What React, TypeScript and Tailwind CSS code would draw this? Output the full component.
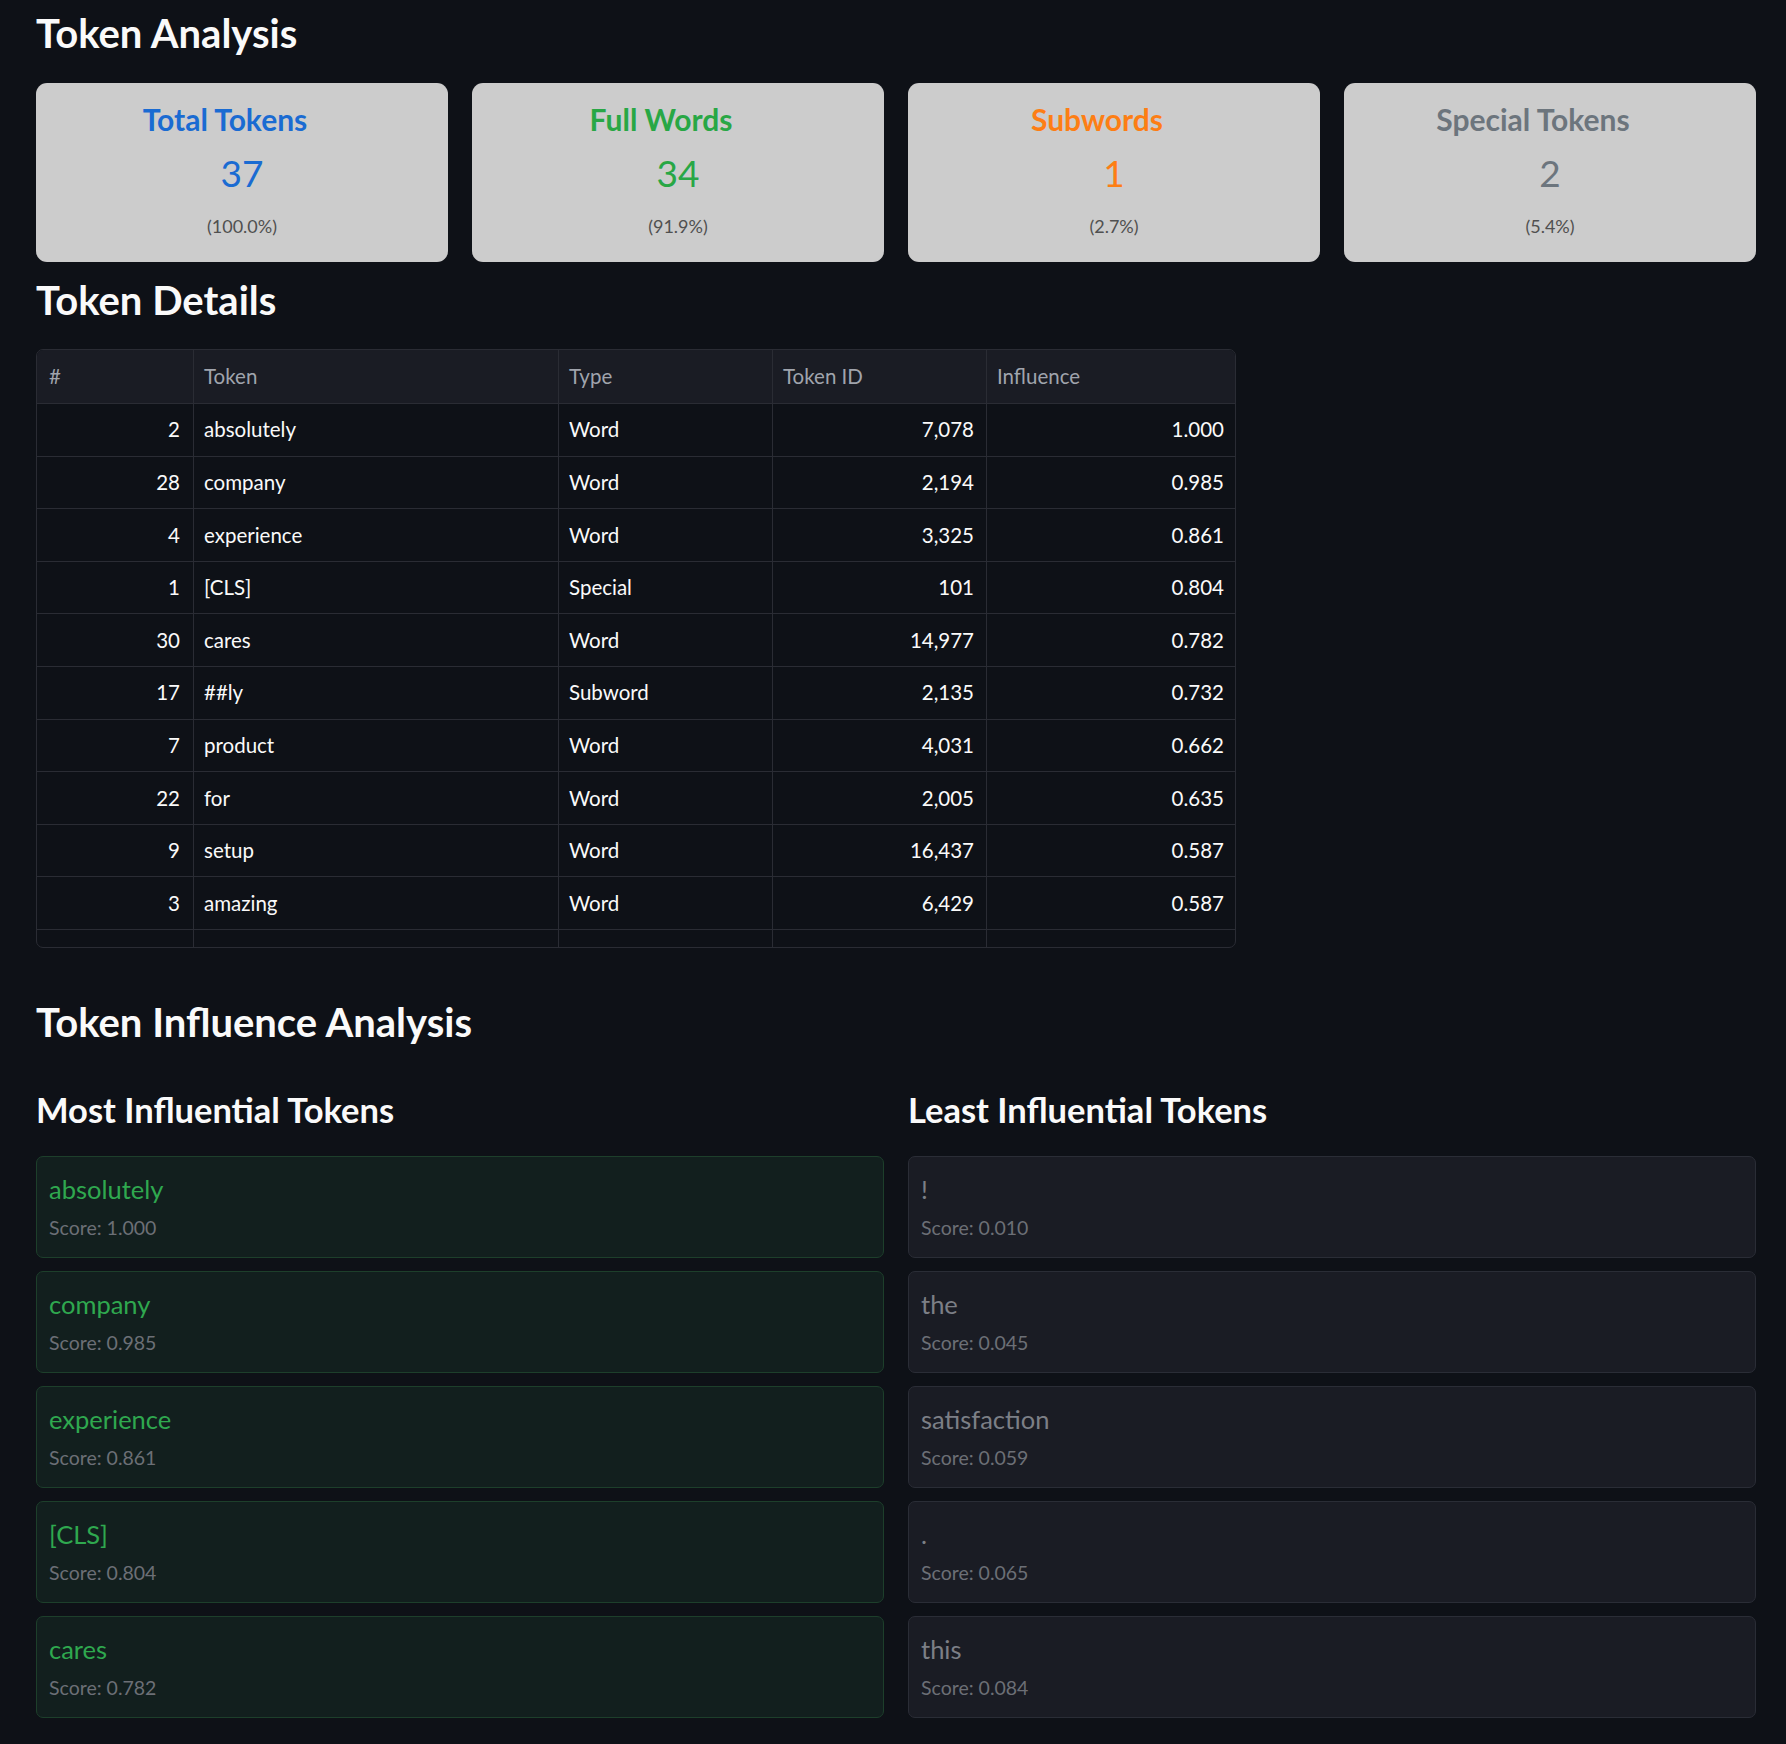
import React from "react";

type Card = { title: string; value: string; pct: string; color: string };
type Row = { idx: number; token: string; type: string; id: string; infl: string };
type Infl = { token: string; score: string };

const cards: Card[] = [
  { title: "Total Tokens", value: "37", pct: "(100.0%)", color: "text-[#1a6bd2]" },
  { title: "Full Words", value: "34", pct: "(91.9%)", color: "text-[#28a745]" },
  { title: "Subwords", value: "1", pct: "(2.7%)", color: "text-[#fd7e14]" },
  { title: "Special Tokens", value: "2", pct: "(5.4%)", color: "text-[#6c757d]" },
];

const rows: Row[] = [
  { idx: 2, token: "absolutely", type: "Word", id: "7,078", infl: "1.000" },
  { idx: 28, token: "company", type: "Word", id: "2,194", infl: "0.985" },
  { idx: 4, token: "experience", type: "Word", id: "3,325", infl: "0.861" },
  { idx: 1, token: "[CLS]", type: "Special", id: "101", infl: "0.804" },
  { idx: 30, token: "cares", type: "Word", id: "14,977", infl: "0.782" },
  { idx: 17, token: "##ly", type: "Subword", id: "2,135", infl: "0.732" },
  { idx: 7, token: "product", type: "Word", id: "4,031", infl: "0.662" },
  { idx: 22, token: "for", type: "Word", id: "2,005", infl: "0.635" },
  { idx: 9, token: "setup", type: "Word", id: "16,437", infl: "0.587" },
  { idx: 3, token: "amazing", type: "Word", id: "6,429", infl: "0.587" },
  { idx: 6, token: "fixed", type: "Word", id: "4,964", infl: "0.553" },
];

const most: Infl[] = [
  { token: "absolutely", score: "1.000" },
  { token: "company", score: "0.985" },
  { token: "experience", score: "0.861" },
  { token: "[CLS]", score: "0.804" },
  { token: "cares", score: "0.782" },
];

const least: Infl[] = [
  { token: "!", score: "0.010" },
  { token: "the", score: "0.045" },
  { token: "satisfaction", score: "0.059" },
  { token: ".", score: "0.065" },
  { token: "this", score: "0.084" },
];

function StatCard({ card }: { card: Card }) {
  return (
    <div className="h-[179px] rounded-[11px] bg-[#cccccc] flex flex-col items-center">
      <div className={`mt-[20px] h-[32px] leading-[32px] pr-[34px] text-[30px] font-bold ${card.color}`}>
        {card.title}
      </div>
      <div className={`mt-[16px] h-[44px] leading-[44px] text-[37px] ${card.color}`}>{card.value}</div>
      <div className="mt-[19px] h-[24px] leading-[24px] text-[18px] text-[#505050]">{card.pct}</div>
    </div>
  );
}

const cols = "grid grid-cols-[156px_365px_214px_214px_1fr]";
const line = "border-l border-[#2a2c34]";

function TokenTable() {
  return (
    <div className="w-[1200px] h-[599px] overflow-hidden rounded-[7px] border border-[#2a2c34] text-[20.5px]">
      <div className={`${cols} h-[54px] bg-[#1a1c24] text-[#a0a4ad] border-b border-[#2a2c34]`}>
        <div className="px-[12px] flex items-center">#</div>
        <div className={`px-[10px] flex items-center ${line}`}>Token</div>
        <div className={`px-[10px] flex items-center ${line}`}>Type</div>
        <div className={`px-[10px] flex items-center ${line}`}>Token ID</div>
        <div className={`px-[10px] flex items-center ${line}`}>Influence</div>
      </div>
      {rows.map((r) => (
        <div key={r.idx} className={`${cols} h-[52.6px] text-[#fafafa] border-b border-[#2a2c34]`}>
          <div className="px-[13px] flex items-center justify-end">{r.idx}</div>
          <div className={`px-[10px] flex items-center ${line}`}>{r.token}</div>
          <div className={`px-[10px] flex items-center ${line}`}>{r.type}</div>
          <div className={`px-[12px] flex items-center justify-end ${line}`}>{r.id}</div>
          <div className={`px-[11px] flex items-center justify-end ${line}`}>{r.infl}</div>
        </div>
      ))}
    </div>
  );
}

function InflBox({ item, good }: { item: Infl; good: boolean }) {
  return (
    <div
      className={
        good
          ? "h-[102px] rounded-[7px] border border-[#1d3f2b] bg-[#121f1e] px-[12px]"
          : "h-[102px] rounded-[7px] border border-[#2a2d36] bg-[#1a1c24] px-[12px]"
      }
    >
      <div className={`pt-[16px] h-[48px] leading-[32px] text-[25.5px] ${good ? "text-[#2fa84f]" : "text-[#7c7f86]"}`}>
        {item.token}
      </div>
      <div className="mt-[11px] h-[24px] leading-[24px] text-[19.5px] text-[#6c6f76]">Score: {item.score}</div>
    </div>
  );
}

export default function App() {
  return (
    <div
      className="min-h-screen bg-[#0e1117] pl-[36px] pr-[30px] pb-[20px]"
      style={{ fontFamily: "Lato, 'Noto Sans', sans-serif" }}
    >
      <h2 className="pt-[9px] h-[56px] leading-[48px] text-[40px] font-bold text-[#fafafa]">Token Analysis</h2>
      <div className="mt-[27px] grid grid-cols-4 gap-[24px]">
        {cards.map((c) => (
          <StatCard key={c.title} card={c} />
        ))}
      </div>

      <h2 className="mt-[14px] h-[48px] leading-[48px] text-[40px] font-bold text-[#fafafa]">Token Details</h2>
      <div className="mt-[25px]">
        <TokenTable />
      </div>

      <h2 className="mt-[50px] h-[48px] leading-[48px] text-[40px] font-bold text-[#fafafa]">
        Token Influence Analysis
      </h2>

      <div className="mt-[44px] grid grid-cols-2 gap-[24px]">
        <div>
          <h3 className="h-[40px] leading-[40px] text-[34.5px] font-bold text-[#fafafa]">Most Influential Tokens</h3>
          <div className="mt-[26px] flex flex-col gap-[12.9px]">
            {most.map((m) => (
              <InflBox key={m.token} item={m} good />
            ))}
          </div>
        </div>
        <div>
          <h3 className="h-[40px] leading-[40px] text-[34.5px] font-bold text-[#fafafa]">Least Influential Tokens</h3>
          <div className="mt-[26px] flex flex-col gap-[12.9px]">
            {least.map((m) => (
              <InflBox key={m.token} item={m} good={false} />
            ))}
          </div>
        </div>
      </div>
    </div>
  );
}
